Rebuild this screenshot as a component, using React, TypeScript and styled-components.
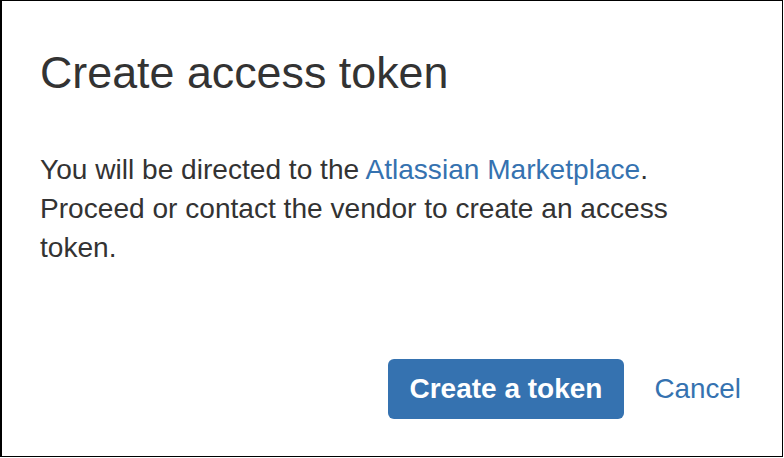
import { createGlobalStyle, styled } from 'styled-components';

const GlobalStyle = createGlobalStyle`
  html, body {
    margin: 0;
    padding: 0;
    background: #ffffff;
  }
  body {
    font-family: 'Liberation Sans', Arial, Helvetica, sans-serif;
  }
`;

const Dialog = styled.div`
  box-sizing: border-box;
  width: 783px;
  height: 457px;
  border: 1px solid #000000;
  border-left-width: 2px;
  display: flex;
  flex-direction: column;
  padding: 45px 41px 37px 38px;
  color: #333333;
`;

const Title = styled.h1`
  margin: 0;
  font-size: 44.8px;
  font-weight: 400;
  line-height: 1.2;
  color: #333333;
`;

const Body = styled.p`
  margin: 50px 0 0;
  font-size: 28.1px;
  line-height: 39px;
  max-width: 650px;
`;

const Link = styled.a`
  color: #3572b0;
  text-decoration: none;
  cursor: pointer;
`;

const Footer = styled.div`
  margin-top: auto;
  display: flex;
  justify-content: flex-end;
  align-items: center;
  gap: 30px;
`;

const PrimaryButton = styled.button`
  box-sizing: border-box;
  height: 60px;
  padding: 0 22px;
  border: none;
  border-radius: 6px;
  background: #3572b0;
  color: #ffffff;
  font-family: inherit;
  font-size: 28px;
  font-weight: 700;
  cursor: pointer;
`;

const CancelLink = styled.a`
  color: #3572b0;
  font-size: 27.8px;
  text-decoration: none;
  cursor: pointer;
`;

export default function App() {
  return (
    <>
      <GlobalStyle />
      <Dialog>
        <Title>Create access token</Title>
        <Body>
          You will be directed to the <Link>Atlassian Marketplace</Link>.
          Proceed or contact the vendor to create an access token.
        </Body>
        <Footer>
          <PrimaryButton>Create a token</PrimaryButton>
          <CancelLink>Cancel</CancelLink>
        </Footer>
      </Dialog>
    </>
  );
}
